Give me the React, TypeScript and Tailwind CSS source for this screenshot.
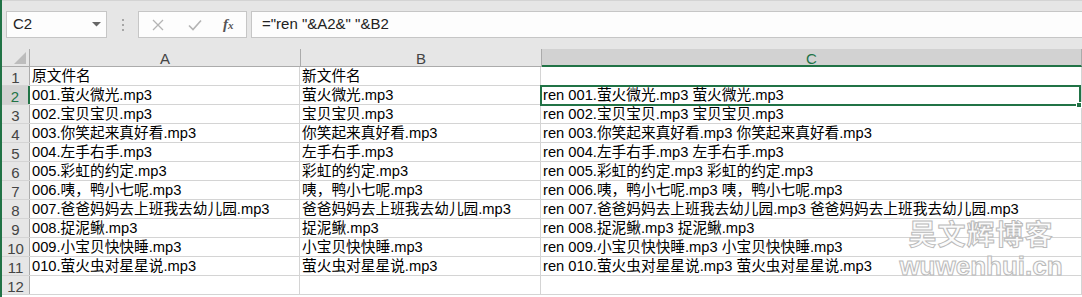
const rowsA = [
  "原文件名",
  "001.萤火微光.mp3",
  "002.宝贝宝贝.mp3",
  "003.你笑起来真好看.mp3",
  "004.左手右手.mp3",
  "005.彩虹的约定.mp3",
  "006.咦，鸭小七呢.mp3",
  "007.爸爸妈妈去上班我去幼儿园.mp3",
  "008.捉泥鳅.mp3",
  "009.小宝贝快快睡.mp3",
  "010.萤火虫对星星说.mp3",
  "",
];

const rowsB = [
  "新文件名",
  "萤火微光.mp3",
  "宝贝宝贝.mp3",
  "你笑起来真好看.mp3",
  "左手右手.mp3",
  "彩虹的约定.mp3",
  "咦，鸭小七呢.mp3",
  "爸爸妈妈去上班我去幼儿园.mp3",
  "捉泥鳅.mp3",
  "小宝贝快快睡.mp3",
  "萤火虫对星星说.mp3",
  "",
];

const rowsC = rowsA.map((a, i) => (i === 0 || !a ? "" : `ren ${a} ${rowsB[i]}`));

function FormulaBar() {
  return (
    <div className="flex h-[49px] items-start border-t border-[#d4d4d4] bg-[#e6e6e6] pt-[10px]">
      {/* name box */}
      <div className="ml-[6px] flex h-[27px] w-[101px] items-center justify-between border border-[#c6c6c6] bg-[#fdfdfd] pl-[6px] pr-[5px]">
        <span className="text-[15px] text-[#222]">C2</span>
        <svg width="9" height="5" viewBox="0 0 9 5">
          <path d="M0 0 L9 0 L4.5 4.5 Z" fill="#666" />
        </svg>
      </div>
      {/* dots */}
      <div className="flex h-[27px] w-[31px] flex-col items-center justify-center gap-[3px]">
        <div className="h-[2px] w-[2px] bg-[#a6a6a6]" />
        <div className="h-[2px] w-[2px] bg-[#a6a6a6]" />
        <div className="h-[2px] w-[2px] bg-[#a6a6a6]" />
      </div>
      {/* cancel / enter / fx */}
      <div className="flex h-[27px] w-[109px] items-center border border-[#c6c6c6] bg-[#fdfdfd]">
        <svg width="12" height="12" viewBox="0 0 12 12" className="ml-[13px]">
          <path d="M1 1 L11 11 M11 1 L1 11" stroke="#b4b4b4" strokeWidth="1.3" />
        </svg>
        <svg width="14" height="12" viewBox="0 0 14 12" className="ml-[24px]">
          <path d="M1 6.5 L5 10.5 L13 1.5" stroke="#b4b4b4" strokeWidth="1.6" fill="none" />
        </svg>
        <span className="ml-[21px] font-['Liberation_Serif',serif] text-[15px] font-semibold italic text-[#555]">
          f<span className="text-[11px]">x</span>
        </span>
      </div>
      {/* formula input */}
      <div className="ml-[4px] flex h-[27px] flex-1 items-center border-y border-l border-[#c6c6c6] bg-[#fdfdfd] pl-[10px]">
        <span className="text-[15px] text-[#222]">="ren "&amp;A2&amp;" "&amp;B2</span>
      </div>
    </div>
  );
}

function Cell({ text, className }: { text: string; className: string }) {
  return (
    <div
      className={`h-full overflow-visible whitespace-nowrap border-r border-[#d4d4d4] pl-[2px] leading-[18px] ${className}`}
    >
      {text}
    </div>
  );
}

export default function App() {
  return (
    <div className="relative h-[297px] w-[1082px] overflow-hidden bg-white font-['Liberation_Sans','Noto_Sans_CJK_SC',sans-serif] text-[14.7px] text-black">
      <div className="absolute left-0 top-0 z-20 h-full w-[2px] bg-[#217346]" />
      <FormulaBar />

      {/* column headers */}
      <div className="flex h-[18px] text-[15px] leading-[17px]">
        <div className="relative w-[30px] border-b border-r border-[#ababab] bg-[#e6e6e6]">
          <svg width="12" height="12" viewBox="0 0 12 12" className="absolute bottom-[2px] right-[3px]">
            <path d="M12 0 L12 12 L0 12 Z" fill="#bcbcbc" />
          </svg>
        </div>
        <div className="w-[271px] border-b border-r border-[#ababab] bg-[#e6e6e6] pt-[1px] text-center text-[#444]">
          A
        </div>
        <div className="w-[241px] border-b border-r border-[#ababab] bg-[#e6e6e6] pt-[1px] text-center text-[#444]">
          B
        </div>
        <div className="flex-1 border-b-2 border-r border-b-[#217346] border-r-[#ababab] bg-[#d2d2d2] pt-[1px] text-center text-[#217346]">
          C
        </div>
      </div>

      {/* rows */}
      {rowsA.map((a, i) => {
        const sel = i === 1;
        return (
          <div key={i} className="flex h-[19px] border-b border-[#d4d4d4]">
            <div
              className={`w-[30px] pt-[2px] text-center text-[15px] leading-[18px] ${
                sel
                  ? "border-r-2 border-[#217346] bg-[#d2d2d2] text-[#217346]"
                  : "border-r border-[#ababab] bg-[#e6e6e6] text-[#444]"
              }`}
            >
              <span className="pl-[2px]">{i + 1}</span>
            </div>
            <Cell text={a} className="w-[270px]" />
            <Cell text={rowsB[i]} className="w-[241px]" />
            <Cell text={rowsC[i]} className="flex-1" />
          </div>
        );
      })}

      {/* active cell C2 */}
      <div className="absolute left-[540px] top-[85px] z-10 h-[21px] w-[541px] border-2 border-[#217346]" />
      <div className="absolute left-[1076px] top-[102px] z-10 h-[6px] w-[6px] border border-white bg-[#217346]" />

      {/* watermark */}
      <div className="pointer-events-none absolute left-[898px] top-[215px] z-30 flex w-[166px] flex-col items-center font-['Noto_Sans_CJK_SC',sans-serif] font-bold text-[#fbfbfb] [-webkit-text-stroke:1px_#bababa]">
        <span className="text-[28px] leading-[36px] tracking-[1px]">吴文辉博客</span>
        <span className="font-['Liberation_Sans',sans-serif] text-[26px] leading-[30px]">
          wuwenhui.cn
        </span>
      </div>
    </div>
  );
}
